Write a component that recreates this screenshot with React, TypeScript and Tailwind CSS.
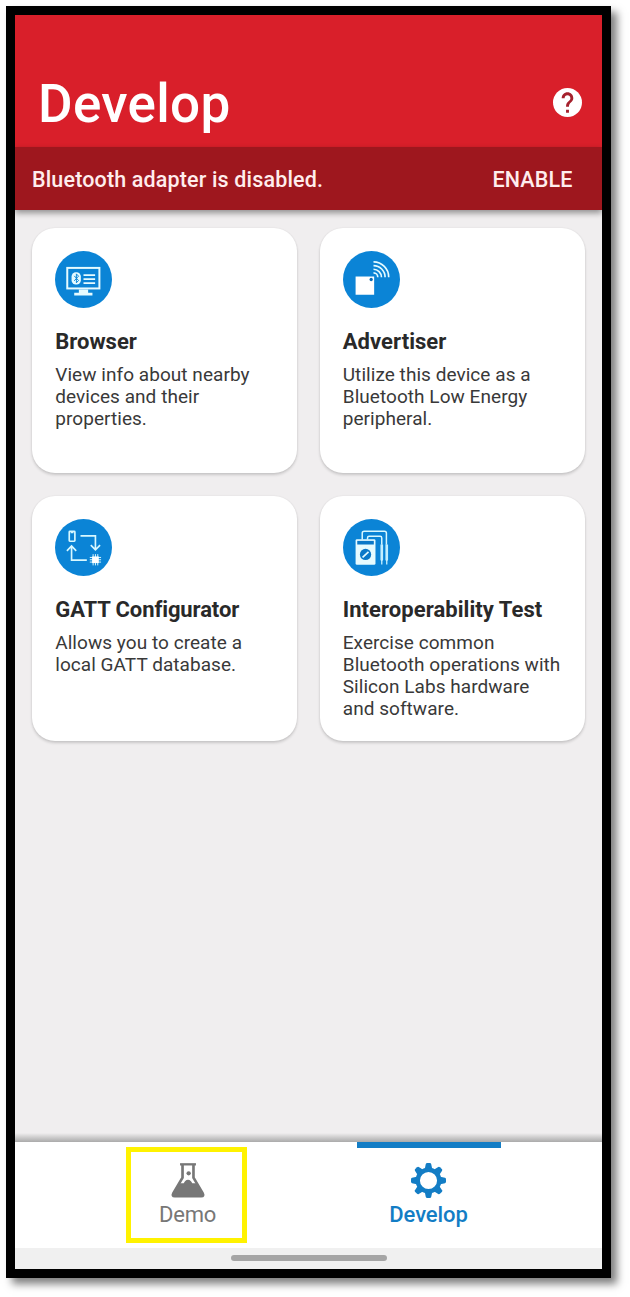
import type { ReactNode } from 'react';

function CircleIcon({ children }: { children: ReactNode }) {
  return (
    <svg viewBox="0 0 172 172" className="block size-[57px]" fill="none" aria-hidden="true">
      <circle cx="86" cy="86" r="86" fill="#0b84d6" />
      {children}
    </svg>
  );
}

function BrowserIcon() {
  return (
    <CircleIcon>
      <g stroke="#e6fbff" strokeWidth="6">
        <rect x="37" y="51" width="97" height="62" />
        <path d="M86 85H121M86 73H121M86 97H121" strokeWidth="5" />
      </g>
      <path d="M72 116H100V126H113V134H58V126H72Z" fill="#e6fbff" />
      <rect x="50" y="64" width="28" height="37" rx="13" fill="#e6fbff" />
      <path d="M58 75L71 89L64.500 96V69L71 76L58 90" stroke="#0b84d6" strokeWidth="3" />
    </CircleIcon>
  );
}

function AdvertiserIcon() {
  return (
    <CircleIcon>
      <rect x="38" y="77" width="56" height="55" fill="#ffffff" />
      <circle cx="85" cy="86" r="5" fill="#0b6cb5" />
      <path
        d="M92 66A13 13 0 0 1 105 79M92 55A24 24 0 0 1 116 79M92 44A35 35 0 0 1 127 79M92 33A46 46 0 0 1 138 79"
        stroke="#e6fbff"
        strokeWidth="5"
      />
    </CircleIcon>
  );
}

function GattIcon() {
  return (
    <CircleIcon>
      <g stroke="#d8f8ff" strokeWidth="5">
        <rect x="43" y="37" width="17" height="30" rx="2" />
        <path d="M47 40H56" strokeWidth="6" />
        <path d="M77 51H122V91M108 79L122 93L136 79" />
        <path d="M96 124H50V84M36 96L50 81L64 96" />
        <path d="M115 106V140M122 106V140M129 106V140M105 116H139M105 123H139M105 130H139" strokeWidth="3" />
      </g>
      <rect x="112" y="113" width="20" height="20" fill="#ffffff" />
    </CircleIcon>
  );
}

function InteroperabilityIcon() {
  return (
    <CircleIcon>
      <g stroke="#d8f8ff" strokeWidth="4.5">
        <path d="M58 62V43Q58 37 64 37H125Q131 37 131 43V78" />
        <path d="M74 62V57Q74 52 79 52H112Q117 52 117 57V78" />
      </g>
      <rect x="38" y="61" width="60" height="77" rx="4" fill="#e6fbff" />
      <rect x="43" y="66" width="50" height="11" fill="#0b78c8" />
      <circle cx="68" cy="107" r="17" fill="#0b78c8" />
      <path d="M59 116L77 99" stroke="#e6fbff" strokeWidth="5" />
      <path
        d="M113 77H121V124L119 127V137H115V127L113 124ZM128 77H136V124L134 127V137H130V127L128 124Z"
        fill="#c4efff"
      />
    </CircleIcon>
  );
}

function HelpIcon() {
  return (
    <svg viewBox="2 2 20 20" className="size-[29px]" aria-label="Help">
      <circle cx="12" cy="12" r="10" fill="#ffffff" />
      <path
        d="M13 19h-2v-2h2v2zm2.070-7.750l-.9.920C13.450 12.900 13 13.500 13 15h-2v-.5c0-1.100.450-2.100 1.170-2.830l1.240-1.260c.370-.360.590-.860.590-1.410 0-1.100-.9-2-2-2s-2 .9-2 2H8c0-2.210 1.790-4 4-4s4 1.790 4 4c0 .880-.360 1.680-.930 2.250z"
        fill="#a5202c"
      />
    </svg>
  );
}

function FlaskIcon() {
  return (
    <svg viewBox="0 0 102 104" className="h-[34.500px] w-[34px]" fill="none" aria-hidden="true">
      <path d="M27 4H75" stroke="#777777" strokeWidth="7" />
      <path d="M34.500 6V44L7 91Q2 100 11 100H91Q100 100 95 91L67.500 44V6" stroke="#777777" strokeWidth="8" />
      <path d="M26 61H38L42 55Q51 46 60 55L64 61H76L98 94Q100 102 91 102H11Q2 102 4 94Z" fill="#777777" />
      <circle cx="53" cy="31" r="6.5" fill="#777777" />
    </svg>
  );
}

const teeth = [0, 45, 90, 135, 180, 225, 270, 315];

function GearIcon() {
  return (
    <svg viewBox="-52 -52 104 104" className="-ml-px size-[35px]" fill="none" aria-hidden="true">
      <circle r="32" stroke="#137dc5" strokeWidth="13" />
      {teeth.map((angle) => (
        <path
          key={angle}
          d="M-11 -35L-8 -49Q-7 -52 -4 -52H4Q7 -52 8 -49L11 -35Z"
          fill="#137dc5"
          transform={`rotate(${angle})`}
        />
      ))}
    </svg>
  );
}

interface CardProps {
  icon: ReactNode;
  title: string;
  titleClass: string;
  lines: string[];
}

function FeatureCard({ icon, title, titleClass, lines }: CardProps) {
  return (
    <article className="h-[245.500px] rounded-[23px] bg-white px-[23px] pt-[23px] shadow-[0_2px_3px_rgba(0,0,0,0.16),0_0_2px_rgba(0,0,0,0.08)]">
      {icon}
      <h2 className={`mt-[20px] text-[22px] leading-[28px] font-bold whitespace-nowrap text-[#292929] ${titleClass}`}>
        {title}
      </h2>
      <p className="mt-[8px] text-[19px] leading-[22.300px] tracking-[0.05px] whitespace-nowrap text-[#393939]">
        {lines.map((line) => (
          <span key={line} className="block">
            {line}
          </span>
        ))}
      </p>
    </article>
  );
}

export default function App() {
  return (
    <div className="h-[1297px] w-[630px] overflow-hidden bg-white pt-[6px] pl-[6px] font-['Roboto',sans-serif]">
      <div className="flex h-[1272px] w-[605px] flex-col border-9 border-black bg-[#f0eeef] shadow-[6px_6px_8px_rgba(0,0,0,0.5)]">
        <header className="flex h-[131.500px] shrink-0 items-end justify-between bg-[#d91f2a] pr-[20px] pl-[23px]">
          <h1 className="mb-[12px] text-[53px] leading-[62px] font-medium tracking-[0.3px] text-white">Develop</h1>
          <div className="mb-[29.500px]">
            <HelpIcon />
          </div>
        </header>
        <div className="relative flex h-[63.500px] shrink-0 items-center justify-between bg-[#9e171e] pt-[4px] pr-[29.500px] pl-[17px] text-[21.500px] font-medium tracking-[0.15px] text-[#ffeded] shadow-[0_3px_6px_rgba(0,0,0,0.4)]">
          <span>Bluetooth adapter is disabled.</span>
          <button type="button">ENABLE</button>
        </div>
        <main className="grid grow grid-cols-2 content-start gap-x-[22.500px] gap-y-[22.500px] px-[17.250px] pt-[17.500px]">
          <FeatureCard
            icon={<BrowserIcon />}
            title="Browser"
            titleClass="tracking-[0px]"
            lines={['View info about nearby', 'devices and their', 'properties.']}
          />
          <FeatureCard
            icon={<AdvertiserIcon />}
            title="Advertiser"
            titleClass="tracking-[0.05px]"
            lines={['Utilize this device as a', 'Bluetooth Low Energy', 'peripheral.']}
          />
          <FeatureCard
            icon={<GattIcon />}
            title="GATT Configurator"
            titleClass="tracking-[-0.1px]"
            lines={['Allows you to create a', 'local GATT database.']}
          />
          <FeatureCard
            icon={<InteroperabilityIcon />}
            title="Interoperability Test"
            titleClass="tracking-[0.05px]"
            lines={['Exercise common', 'Bluetooth operations with', 'Silicon Labs hardware', 'and software.']}
          />
        </main>
        <div className="h-[9px] shrink-0 bg-linear-to-b from-[#f0eeef] to-[#aaaaaa]" />
        <nav className="flex h-[106px] shrink-0 justify-between bg-white pr-[101px] pl-[111px]">
          <div className="mt-[5px] flex h-[96px] w-[121px] flex-col items-center border-5 border-[#fff200] pt-[11px] pl-[2px] text-[#777777]">
            <FlaskIcon />
            <span className="mt-[4.500px] text-[22px] leading-[26px] tracking-[-0.2px]">Demo</span>
          </div>
          <div className="flex w-[144px] flex-col items-center border-t-6 border-[#137dc5] pt-[15px] text-[#137dc5]">
            <GearIcon />
            <span className="mt-[4px] -ml-px text-[22px] leading-[26px] font-medium tracking-[-0.1px]">Develop</span>
          </div>
        </nav>
        <div className="flex h-[21px] shrink-0 justify-center bg-[#f0f0f0] pt-[7px]">
          <div className="h-[6px] w-[156px] rounded-full bg-[#a5a5a5]" />
        </div>
      </div>
    </div>
  );
}
